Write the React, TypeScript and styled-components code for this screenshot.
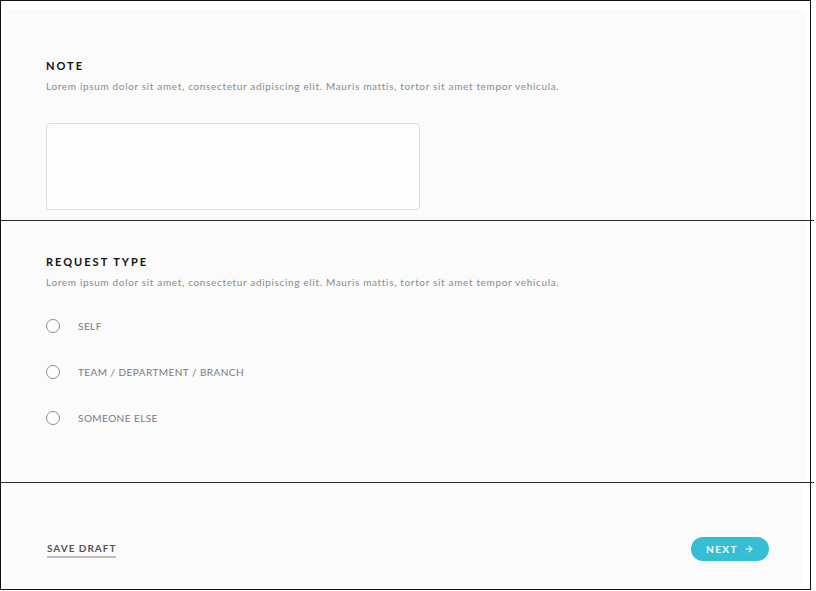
import React from 'react';
import styled, { createGlobalStyle } from 'styled-components';
import { ArrowRight } from 'lucide-react';

const GlobalStyle = createGlobalStyle`
  html, body {
    margin: 0;
    padding: 0;
    background: #ffffff;
  }
  body {
    font-family: Lato, "Open Sans", sans-serif;
    -webkit-font-smoothing: antialiased;
  }
`;

const Frame = styled.div`
  width: 809px;
  height: 588px;
  border: 1px solid #111;
  display: flex;
  flex-direction: column;
  background: #ffffff;
`;

const Section = styled.section<{ $height: number; $last?: boolean }>`
  height: ${(p) => p.$height}px;
  padding: 0 9px 0 4px;
  border-bottom: ${(p) => (p.$last ? 'none' : '1px solid #2a2a2a')};
  margin-right: ${(p) => (p.$last ? '0' : '-4px')};
  display: flex;
  flex-direction: column;
  box-sizing: border-box;
  flex-shrink: 0;
`;

const Panel = styled.div<{ $top?: number }>`
  flex: 1;
  margin-top: ${(p) => p.$top ?? 0}px;
  margin-right: ${(p) => (p.$top ? 0 : 0)}px;
  background: #fbfbfb;
  display: flex;
  flex-direction: column;
  padding-left: 41px;
  box-sizing: border-box;
`;

const Heading = styled.h2<{ $pad: number }>`
  margin: ${(p) => p.$pad}px 0 0;
  font-size: 11px;
  line-height: 14px;
  font-weight: 700;
  letter-spacing: 2px;
  color: #111;
  text-transform: uppercase;
`;

const Description = styled.p`
  margin: 6px 0 0;
  font-size: 10px;
  line-height: 14px;
  letter-spacing: 0.66px;
  color: #8a8a8a;
`;

const NoteBox = styled.textarea`
  margin-top: 30px;
  width: 374px;
  height: 87px;
  box-sizing: border-box;
  border: 1.5px solid #dcdcdc;
  border-radius: 4px;
  background: #fdfdfd;
  resize: none;
  outline: none;
`;

const RadioList = styled.div`
  margin-top: 27px;
  display: flex;
  flex-direction: column;
  gap: 26px;
`;

const RadioRow = styled.label`
  height: 20px;
  display: flex;
  align-items: center;
  gap: 18px;
  cursor: pointer;
`;

const RadioCircle = styled.span`
  width: 14px;
  height: 14px;
  box-sizing: border-box;
  border: 1.5px solid #8d8d8d;
  border-radius: 50%;
  background: #fff;
`;

const RadioLabel = styled.span`
  font-size: 10px;
  letter-spacing: 0.45px;
  color: #7a7a7a;
  text-transform: uppercase;
`;

const Footer = styled.div`
  flex: 1;
  display: flex;
  align-items: center;
  justify-content: space-between;
  padding: 26px 32px 0 42px;
  background: #fbfbfb;
`;

const DraftLink = styled.a`
  font-size: 10px;
  font-weight: 700;
  letter-spacing: 1px;
  color: #555;
  text-decoration: none;
  padding-bottom: 2px;
  border-bottom: 2px solid #bdbdbd;
  margin-top: 2px;
  cursor: pointer;
`;

const NextButton = styled.button`
  height: 24px;
  width: 78px;
  border: none;
  border-radius: 12px;
  background: #36bed4;
  color: #fff;
  font-family: inherit;
  font-size: 10px;
  font-weight: 700;
  letter-spacing: 1.4px;
  display: flex;
  align-items: center;
  justify-content: center;
  gap: 6px;
  padding: 0;
  cursor: pointer;
`;

const options = ['Self', 'Team / Department / Branch', 'Someone else'];

const lorem =
  'Lorem ipsum dolor sit amet, consectetur adipiscing elit. Mauris mattis, tortor sit amet tempor vehicula.';

export default function App() {
  return (
    <>
      <GlobalStyle />
      <Frame>
        <Section $height={220}>
          <Panel $top={9}>
            <Heading $pad={49}>Note</Heading>
            <Description>{lorem}</Description>
            <NoteBox />
          </Panel>
        </Section>
        <Section $height={262}>
          <Panel>
            <Heading $pad={34}>Request type</Heading>
            <Description>{lorem}</Description>
            <RadioList>
              {options.map((o) => (
                <RadioRow key={o}>
                  <RadioCircle />
                  <RadioLabel>{o}</RadioLabel>
                </RadioRow>
              ))}
            </RadioList>
          </Panel>
        </Section>
        <Section $height={106} $last>
          <Footer>
            <DraftLink>SAVE DRAFT</DraftLink>
            <NextButton>
              NEXT <ArrowRight size={10} strokeWidth={2.5} />
            </NextButton>
          </Footer>
        </Section>
      </Frame>
    </>
  );
}
